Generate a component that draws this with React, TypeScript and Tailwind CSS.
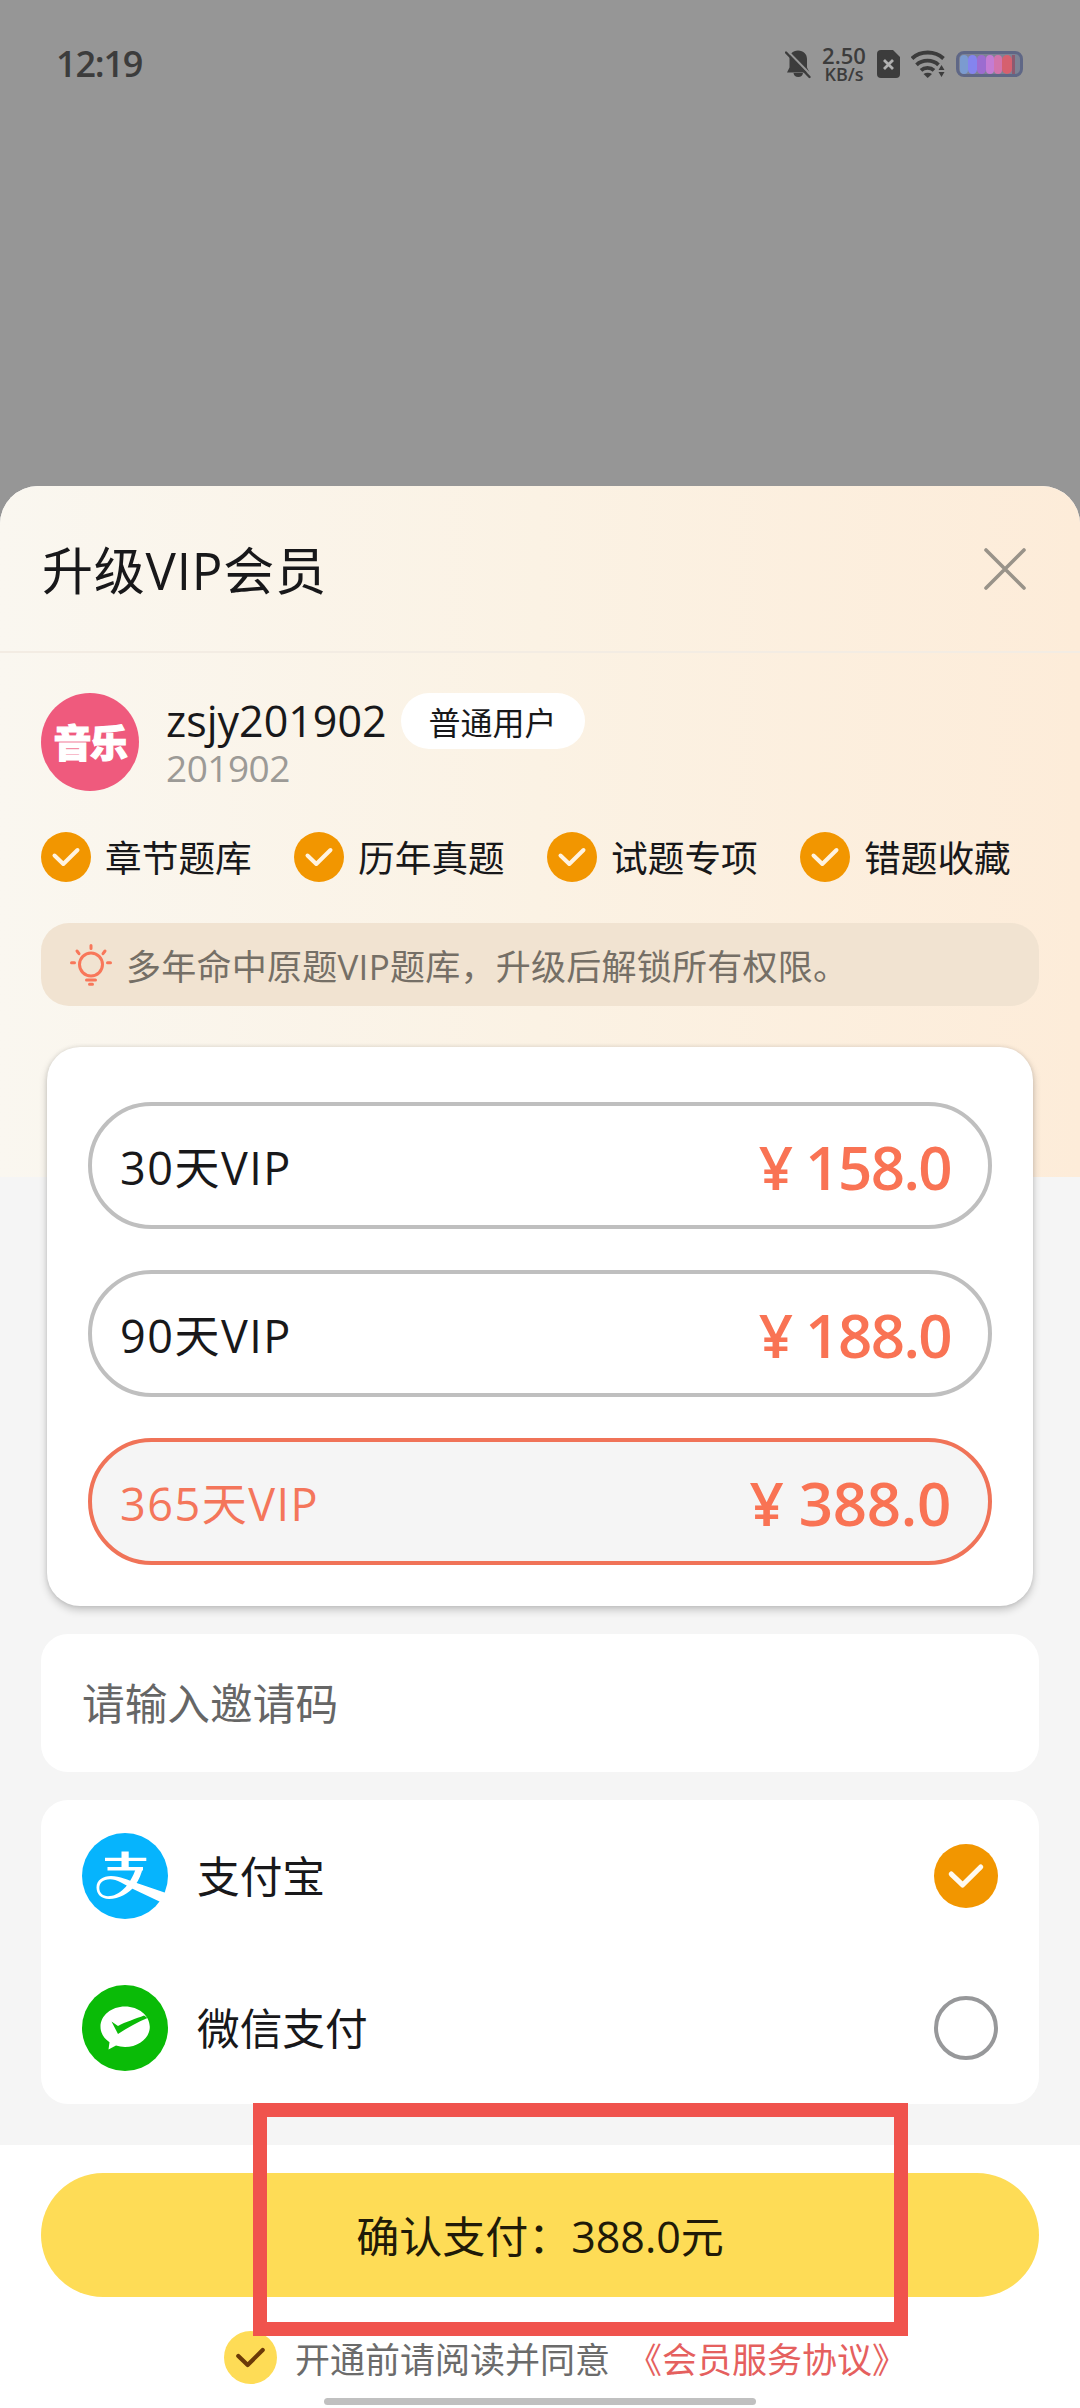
import { useState } from 'react';
import { clsx } from 'clsx';

interface Plan {
  id: string;
  label: string;
  price: string;
}

const plans: Plan[] = [
  { id: 'm1', label: '30天VIP', price: '158.0' },
  { id: 'm3', label: '90天VIP', price: '188.0' },
  { id: 'y1', label: '365天VIP', price: '388.0' },
];

const features = ['章节题库', '历年真题', '试题专项', '错题收藏'];

function CheckCircle({ className, stroke }: { className?: string; stroke: string }) {
  return (
    <svg viewBox="0 0 50 50" className={clsx('shrink-0', className)}>
      <circle cx="25" cy="25" r="25" fill="currentColor" />
      <path d="M13.500 23.500 L22.300 32 L36.500 18" fill="none" stroke={stroke} strokeWidth="4" strokeLinecap="round" strokeLinejoin="round" />
    </svg>
  );
}

function StatusBar() {
  return (
    <div className="flex h-[128px] items-center justify-between pl-[56px] pr-[57px] text-[#3c3c3c]">
      <span className="text-[36px] leading-none font-semibold tracking-[-1.200px]">12:19</span>
      <div className="flex items-center">
        {/* Muted bell */}
        <svg viewBox="0 0 26 30" className="mr-[11px] h-[30px] w-[26px]">
          <path d="M13 1.500c5.600 0 9 3.600 9 8.500v8.500l2.500 5H2l2.500-5V10c0-4.900 3-8.500 8.500-8.500z" fill="currentColor" />
          <path d="M8.500 24h9.500a4.800 4.800 0 0 1-9.500 0z" fill="currentColor" />
          <path d="M2.500 2 L26.500 26.500" stroke="#969696" strokeWidth="2.200" />
          <path d="M1 3.500 L24.500 28" stroke="currentColor" strokeWidth="2.400" strokeLinecap="round" />
        </svg>
        <div className="mr-[11px] flex w-[44px] flex-col items-center font-semibold">
          <span className="text-[22px] leading-[20px]">2.50</span>
          <span className="text-[18px] leading-[19px]">KB/s</span>
        </div>
        {/* SIM missing */}
        <svg viewBox="0 0 23 28" className="mr-[11px] h-[28px] w-[23px]">
          <path d="M4 0h12l7 7v17a4 4 0 0 1-4 4H4a4 4 0 0 1-4-4V4a4 4 0 0 1 4-4z" fill="currentColor" />
          <path d="M7 10l9 9M16 10l-9 9" stroke="#b0b0b0" strokeWidth="2.800" />
        </svg>
        {/* Wifi */}
        <svg viewBox="0 0 34 28" className="mr-[11px] h-[28px] w-[34px]">
          <g fill="none" stroke="currentColor" strokeWidth="3.800">
            <path d="M1 8.500C9.500 0.500 24 0.500 32.500 8.500" />
            <path d="M5.500 14.800c6-5.500 16-5.500 22 0" />
            <path d="M10 20.300c3.500-3.200 9.500-3.200 13 0" />
          </g>
          <path d="M12.500 24c2.500-1.800 6-1.800 8.500 0L16.700 28z" fill="currentColor" />
          <path d="M30.500 15l3 5h-6zM30.500 27l3-5h-6z" fill="currentColor" />
        </svg>
        {/* Battery */}
        <div className="flex h-[26px] w-[67px] items-center rounded-[8px] border-[3px] border-[#5f6786] bg-[#7d8394] px-[1px]">
          <span className="h-[19px] w-[8px] rounded-full bg-[#7b9bd0]" />
          <span className="h-[19px] w-[9px] rounded-full bg-[#8484ee]" />
          <span className="h-[19px] w-[9px] rounded-full bg-[#9c6cd0]" />
          <span className="h-[19px] w-[8px] rounded-full bg-[#c47cd4]" />
          <span className="h-[19px] w-[8px] rounded-full bg-[#d274ac]" />
          <span className="h-[19px] w-[10px] rounded-full bg-[#d6606e]" />
          <span className="h-[19px] w-[3px] bg-[#8c5a70]" />
        </div>
      </div>
    </div>
  );
}

function BulbIcon() {
  return (
    <svg viewBox="0 0 42 42" className="h-[42px] w-[42px] shrink-0" fill="none" stroke="#f8775a" strokeWidth="3" strokeLinecap="round">
      <circle cx="21" cy="20.500" r="11.500" />
      <path d="M21 1.500v3M7 7l2 2.700M35 7l-2 2.700M1.500 18.800h3M37.500 18.800h3M16.500 36h9M19.500 40.300h3" />
    </svg>
  );
}

function AlipayIcon() {
  return (
    <svg viewBox="0 0 86 86" className="h-[86px] w-[86px]">
      <circle cx="43" cy="43" r="43" fill="#06b4fd" />
      <g fill="#fff">
        <path d="M39.500 18.500h7.200v17h-7.200zM23 24.700h41.300V28H23zM25.500 34H61v3.400H25.500z" />
        <path d="M54 35l7-1C59.500 41 57 47 53 52.500 47 60.500 37 66 27 66 19 66 14.500 61 14.500 54.500 14.500 47 21 43 29 43 38 43 46 47 54.700 50L84 60 78.500 69 50 55.500C42 51 35 46.200 28 46.200 21 46.200 17.300 50 17.300 55S21 63.200 26 63.200C37 63.200 48 53 54 35z" />
      </g>
    </svg>
  );
}

function WechatPayIcon() {
  return (
    <svg viewBox="0 0 86 86" className="h-[86px] w-[86px]">
      <circle cx="43" cy="43" r="43" fill="#0abb07" />
      <path d="M43 21.500c13.600 0 24.800 9 24.800 20.300S56.600 62 43 62c-3.200 0-6.200-.500-9-1.400L26.500 64.500l1-7.200C22 53.500 18.500 48 18.500 41.800c0-11.300 10.900-20.300 24.500-20.300z" fill="#fff" />
      <path d="M29.500 36.500l6.500 4.500c7-4 18.500-7.500 26-10.500l3.500 2.500C56 37 45 43 36 49z" fill="#0abb07" />
    </svg>
  );
}

export default function App() {
  const [selected, setSelected] = useState('y1');
  const [payment, setPayment] = useState<'alipay' | 'wechat'>('alipay');
  const current = plans.find(p => p.id === selected)!;

  const payments = [
    { id: 'alipay' as const, label: '支付宝', icon: AlipayIcon },
    { id: 'wechat' as const, label: '微信支付', icon: WechatPayIcon },
  ];

  return (
    <div className="relative flex h-[2408px] w-[1080px] flex-col overflow-hidden bg-[#969696] font-['Open_Sans','Noto_Sans_CJK_SC',sans-serif] text-[#18181a]">
      <div className="h-[486px] shrink-0">
        <StatusBar />
      </div>

      {/* Bottom sheet */}
      <div className="flex flex-1 flex-col overflow-hidden rounded-t-[38px] bg-[#f5f5f5]">
        <div className="h-[691px] shrink-0 bg-linear-to-r from-[#faf7f0] via-[#fbf2e4] to-[#fdecd9]">
          <div className="flex h-[167px] items-center justify-between border-b-2 border-[#f3ece3] pl-[42px] pr-[54px]">
            <h1 className="pt-[4px] text-[51px] leading-none tracking-[0.800px]">升级VIP会员</h1>
            <svg viewBox="0 0 42 42" className="h-[42px] w-[42px]" stroke="#999389" strokeWidth="3.600" strokeLinecap="round">
              <path d="M2 2l38 38M40 2L2 40" />
            </svg>
          </div>

          {/* User */}
          <div className="mt-[40px] flex px-[41px]">
            <div className="flex h-[98px] w-[98px] items-center justify-center rounded-full bg-[#ef5a7d]">
              <span className="text-[38px] leading-none font-black tracking-[-1.500px] text-white [-webkit-text-stroke:1.200px_white]">音乐</span>
            </div>
            <div className="ml-[27px] flex flex-col">
              <div className="flex h-[56px] items-center">
                <span className="text-[43px] leading-[54px]">zsjy201902</span>
                <span className="ml-[14px] flex h-[56px] w-[184px] items-center justify-center rounded-full bg-white pt-[3px] text-[32px] leading-none">普通用户</span>
              </div>
              <span className="text-[37px] leading-[38px] tracking-[-0.500px] text-[#9c9a96]">201902</span>
            </div>
          </div>

          {/* Features */}
          <div className="mt-[41px] flex pl-[41px]">
            {features.map(name => (
              <div key={name} className="flex h-[50px] w-[253px] shrink-0 items-center gap-[14px]">
                <CheckCircle className="h-[50px] w-[50px] text-[#f29600]" stroke="#fff3e0" />
                <span className="pt-[3px] text-[36.700px] leading-none">{name}</span>
              </div>
            ))}
          </div>

          <div className="mx-[41px] mt-[41px] flex h-[83px] items-center gap-[14px] rounded-[28px] bg-[#f1e3d1] pl-[29px]">
            <BulbIcon />
            <span className="pt-[3px] text-[35px] leading-none tracking-[0.250px] text-[#756f66]">多年命中原题VIP题库，升级后解锁所有权限。</span>
          </div>
        </div>

        {/* Plans */}
        <div className="relative mx-[47px] mt-[-130px] flex h-[559px] shrink-0 flex-col gap-[41px] rounded-[33px] bg-white px-[41px] pt-[55px] shadow-[0_4px_8px_rgba(0,0,0,0.2),0_0_4px_rgba(0,0,0,0.1)]">
          {plans.map(plan => (
            <button
              key={plan.id}
              onClick={() => setSelected(plan.id)}
              className={clsx(
                'flex h-[127px] items-center justify-between rounded-full border-[4px] pl-[28px] pr-[37px] pt-[3px]',
                plan.id === selected ? 'border-[#f07358] bg-[#f5f5f5]' : 'border-[#bfbfbf] bg-white'
              )}
            >
              <span className={clsx('text-[45px] leading-none tracking-[1.500px]', plan.id === selected && 'text-[#f4765b]')}>{plan.label}</span>
              <span className={clsx('text-[60px] leading-none font-semibold text-[#f97354]', plan.price.startsWith('1') ? 'tracking-[-1.600px]' : 'tracking-[-0.300px]')}>
                ¥ {plan.price}
              </span>
            </button>
          ))}
        </div>

        <div className="mx-[41px] mt-[28px] flex h-[138px] shrink-0 items-center rounded-[27px] bg-white px-[41px]">
          <span className="pt-[3px] text-[42.700px] leading-none text-[#666666]">请输入邀请码</span>
        </div>

        {/* Payment methods */}
        <div className="mx-[41px] mt-[28px] flex h-[304px] shrink-0 flex-col rounded-[27px] bg-white px-[41px]">
          {payments.map(({ id, label, icon: Icon }) => (
            <div key={id} onClick={() => setPayment(id)} className="flex h-[152px] items-center">
              <Icon />
              <span className="ml-[29px] flex-1 pt-[3px] text-[42.700px] leading-none">{label}</span>
              {payment === id ? (
                <CheckCircle className="h-[64px] w-[64px] text-[#f29600]" stroke="#fffaf0" />
              ) : (
                <span className="h-[64px] w-[64px] rounded-full border-[4px] border-[#97989a]" />
              )}
            </div>
          ))}
        </div>

        {/* Footer */}
        <div className="mt-[41px] flex flex-1 flex-col items-center bg-white pt-[28px]">
          <button className="flex h-[124px] w-[998px] shrink-0 items-center justify-center rounded-full bg-[#fedc56] pt-[3px] text-[43px] leading-none text-[#201a08]">
            确认支付：{current.price}元
          </button>
          <div className="mt-[34px] flex h-[53px] w-full shrink-0 items-center pl-[224px] text-[35px] leading-none">
            <CheckCircle className="h-[53px] w-[53px] text-[#fedc56]" stroke="#6b3a08" />
            <span className="ml-[18px] pt-[4px] text-[#6b6b6b]">开通前请阅读并同意</span>
            <span className="ml-[17px] pt-[4px] text-[#e5605e]">《会员服务协议》</span>
          </div>
          <div className="mt-[14px] h-[7px] w-[432px] shrink-0 rounded-full bg-[#c0c0c0]" />
        </div>
      </div>

      {/* Highlight frame over the pay button */}
      <div className="absolute top-[2103px] left-[253px] h-[233px] w-[655px] border-[14px] border-[#f0534d]" />
    </div>
  );
}
